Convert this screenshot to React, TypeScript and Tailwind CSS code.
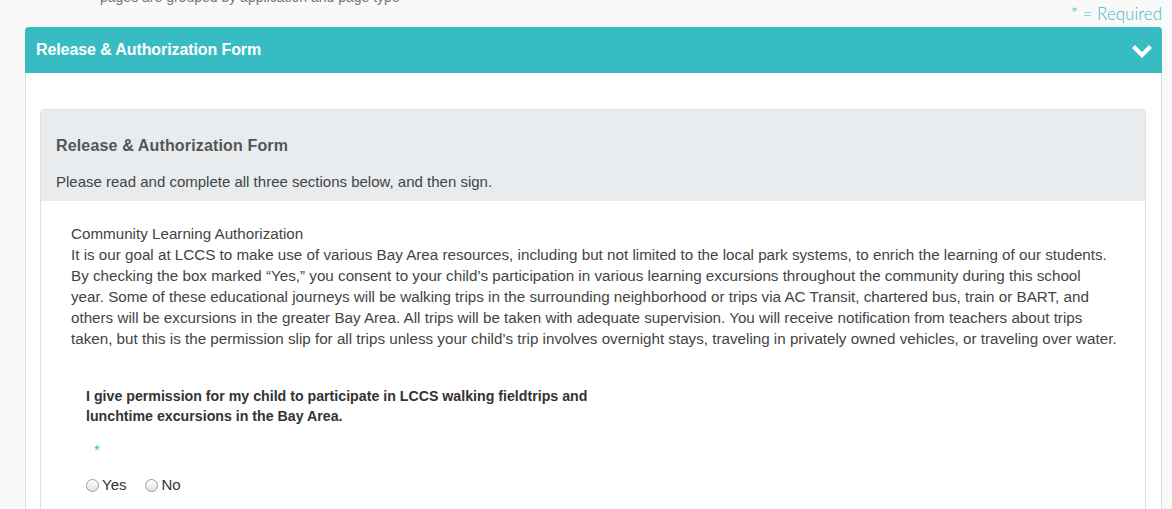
import React from 'react';

function Radio({ label }: { label: string }) {
  return (
    <label className="flex items-center gap-[3px] text-[15px] text-[#333]">
      <span className="inline-block h-[13px] w-[13px] rounded-full border border-[#9a9a9a] bg-gradient-to-b from-white to-[#e2e2e2] shadow-[inset_0_1px_0_#fff]" />
      {label}
    </label>
  );
}

export default function App() {
  return (
    <div className="min-h-[509px] w-[1172px] overflow-hidden bg-[#f9f9f9] font-['Liberation_Sans',Arial,sans-serif]">
      {/* cut-off intro line */}
      <div className="-mt-[13px] h-[14px] pl-[100px] text-[14px] text-[#777]">
        pages are grouped by application and page type
      </div>

      <div className="flex h-[26px] items-center justify-end pr-[10px] font-['Lato',sans-serif] text-[17px] font-light text-[#38bcc3]">
        * = Required
      </div>

      <div className="ml-[25px] mr-[10px]">
        {/* accordion header */}
        <div className="flex h-[46px] items-center justify-between rounded-t-[4px] bg-[#38bcc3] pl-[11px] pr-[10px]">
          <span className="text-[16px] font-bold text-white tracking-[-0.1px]">Release &amp; Authorization Form</span>
          <svg width="20" height="14" viewBox="0 0 20 14" className="mt-[4px]">
            <polyline points="3,3 10,10 17,3" fill="none" stroke="#fff" strokeWidth="4.2" strokeLinecap="square" />
          </svg>
        </div>

        {/* accordion body */}
        <div className="border-x border-[#dcdfe0] bg-white pb-[40px] pl-[14px] pr-[15px] pt-[36px]">
          <div className="rounded-[4px] border border-[#dde1e3]">
            <div className="rounded-t-[4px] bg-[#e8ecee] px-[15px] pb-[9px] pt-[26px]">
              <div className="text-[16px] font-bold leading-[20px] tracking-[0.15px] text-[#555]">Release &amp; Authorization Form</div>
              <div className="mt-[16px] text-[15px] leading-[20px] text-[#444]">
                Please read and complete all three sections below, and then sign.
              </div>
            </div>

            <div className="bg-white pb-[40px] pl-[30px] pr-[20px] pt-[22px]">
              <div className="max-w-[1052px] text-[15.2px] leading-[21px] text-[#444]">
                Community Learning Authorization
                <br />
                It is our goal at LCCS to make use of various Bay Area resources, including but not limited to the local park systems, to enrich the learning of our students.
                <br />
                By checking the box marked “Yes,” you consent to your child’s participation in various learning excursions throughout the community during this school
                <br />
                year. Some of these educational journeys will be walking trips in the surrounding neighborhood or trips via AC Transit, chartered bus, train or BART, and others will be excursions in the greater Bay Area. All trips will be taken with adequate supervision. You will receive notification from teachers about trips taken, but this is the permission slip for all trips unless your child’s trip involves overnight stays, traveling in privately owned vehicles, or traveling over water.
              </div>

              <div className="pl-[15px] pt-[37px]">
                <div className="w-[540px] text-[14.2px] font-bold leading-[20px] text-[#333]">
                  I give permission for my child to participate in LCCS walking fieldtrips and lunchtime excursions in the Bay Area.
                </div>
                <div className="mt-[14px] pl-[8px] text-[15px] leading-[20px] text-[#38bcc3]">*</div>
                <div className="mt-[14px] flex items-center gap-[19px]">
                  <Radio label="Yes" />
                  <Radio label="No" />
                </div>
              </div>
            </div>
          </div>
        </div>
      </div>
    </div>
  );
}
